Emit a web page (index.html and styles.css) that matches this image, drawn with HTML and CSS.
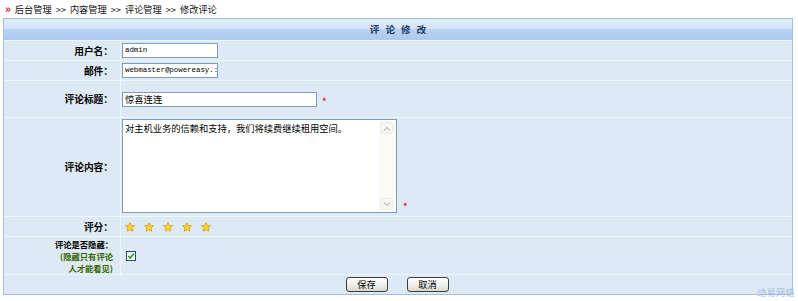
FILE: index.html
```html
<!DOCTYPE html>
<html lang="zh">
<head>
<meta charset="utf-8">
<title>修改评论</title>
<link rel="stylesheet" href="styles.css">
</head>
<body>
<div class="crumb"><span class="raq">»</span>后台管理 &gt;&gt; 内容管理 &gt;&gt; 评论管理 &gt;&gt; 修改评论</div>
<div class="panel">
  <div class="head">评论修改</div>

  <div class="lbl">用户名：</div>
  <div class="val"><div class="inp small">admin</div></div>

  <div class="lbl">邮件：</div>
  <div class="val"><div class="inp small">webmaster@powereasy.:</div></div>

  <div class="lbl">评论标题：</div>
  <div class="val"><div class="inp title">惊喜连连</div><span class="req">*</span></div>

  <div class="lbl">评论内容：</div>
  <div class="val top">
    <div class="ta">
      <div class="ta-text">对主机业务的信赖和支持，我们将续费继续租用空间。</div>
      <div class="ta-bar">
        <div class="arr"><svg width="8" height="5" viewBox="0 0 8 5"><path d="M1 4.5 L4 1.5 L7 4.5" fill="none" stroke="#b9c3d3" stroke-width="1.2"/></svg></div>
        <div class="arr"><svg width="8" height="5" viewBox="0 0 8 5"><path d="M1 0.5 L4 3.5 L7 0.5" fill="none" stroke="#b9c3d3" stroke-width="1.2"/></svg></div>
      </div>
    </div>
    <span class="req bottom">*</span>
  </div>

  <div class="lbl">评分：</div>
  <div class="val stars">
    <svg class="star" viewBox="0 0 10 10"><polygon points="5,0.6 6.3,3.5 9.5,3.7 7.1,5.9 7.8,9.2 5,7.5 2.2,9.2 2.9,5.9 0.5,3.7 3.7,3.5" fill="#ffd52e" stroke="#d79a12" stroke-width="0.8" stroke-linejoin="round"/></svg>
    <svg class="star" viewBox="0 0 10 10"><polygon points="5,0.6 6.3,3.5 9.5,3.7 7.1,5.9 7.8,9.2 5,7.5 2.2,9.2 2.9,5.9 0.5,3.7 3.7,3.5" fill="#ffd52e" stroke="#d79a12" stroke-width="0.8" stroke-linejoin="round"/></svg>
    <svg class="star" viewBox="0 0 10 10"><polygon points="5,0.6 6.3,3.5 9.5,3.7 7.1,5.9 7.8,9.2 5,7.5 2.2,9.2 2.9,5.9 0.5,3.7 3.7,3.5" fill="#ffd52e" stroke="#d79a12" stroke-width="0.8" stroke-linejoin="round"/></svg>
    <svg class="star" viewBox="0 0 10 10"><polygon points="5,0.6 6.3,3.5 9.5,3.7 7.1,5.9 7.8,9.2 5,7.5 2.2,9.2 2.9,5.9 0.5,3.7 3.7,3.5" fill="#ffd52e" stroke="#d79a12" stroke-width="0.8" stroke-linejoin="round"/></svg>
    <svg class="star" viewBox="0 0 10 10"><polygon points="5,0.6 6.3,3.5 9.5,3.7 7.1,5.9 7.8,9.2 5,7.5 2.2,9.2 2.9,5.9 0.5,3.7 3.7,3.5" fill="#ffd52e" stroke="#d79a12" stroke-width="0.8" stroke-linejoin="round"/></svg>
  </div>

  <div class="lbl multi">
    <div class="lines">
      <div>评论是否隐藏：</div>
      <div class="green">(隐藏只有评论</div>
      <div class="green">人才能看见)</div>
    </div>
  </div>
  <div class="val"><div class="chk"><svg width="8" height="8" viewBox="0 0 8 8"><path d="M1.2 4 L3.2 6 L6.8 1.8" fill="none" stroke="#21a121" stroke-width="1.6"/></svg></div></div>

  <div class="foot">
    <div class="btn">保存</div>
    <div class="btn">取消</div>
  </div>
</div>
<div class="mark">动易网络</div>
</body>
</html>
```
FILE: styles.css
```css
html, body {
  margin: 0;
  padding: 0;
  background: #ffffff;
}
body {
  font-family: "Noto Sans CJK SC", "Liberation Sans", sans-serif;
  font-size: 9px;
  color: #000;
  position: relative;
  width: 798px;
  height: 301px;
  overflow: hidden;
}
.crumb {
  height: 18px;
  line-height: 16px;
  padding-left: 5px;
  font-size: 9.2px;
  color: #111;
  white-space: nowrap;
  word-spacing: 2px;
}
.raq {
  color: #c8102e;
  font-weight: bold;
  font-size: 11px;
  margin-right: 4px;
}
.panel {
  margin-left: 3px;
  width: 790px;
  box-sizing: border-box;
  border: 1px solid #a6bfd6;
  display: grid;
  grid-template-columns: 116px 671px;
  grid-template-rows: 21px 19px 19px 36px 98px 19px 37px 19px;
  gap: 1px;
  background: #eef5fc;
}
.head {
  grid-column: 1 / -1;
  background: linear-gradient(#e2edf9 0%, #d3e4f7 45%, #b6d1f1 50%, #adcaee 100%);
  text-align: center;
  font-weight: bold;
  font-size: 9.6px;
  letter-spacing: 6px;
  padding-left: 6px;
  line-height: 21px;
  color: #1b3768;
}
.lbl, .val, .foot {
  background: #dde9f5;
}
.lbl {
  display: flex;
  align-items: center;
  justify-content: flex-end;
  padding-right: 7px;
  font-weight: bold;
  font-size: 9.7px;
  text-align: right;
  white-space: nowrap;
}
.lines {
  display: flex;
  flex-direction: column;
  align-items: flex-end;
  line-height: 12px;
  font-size: 8.3px;
}
.green {
  color: #336600;
}
.val {
  display: flex;
  align-items: center;
  padding-left: 1px;
}
.val.top {
  align-items: flex-start;
  padding-top: 1px;
}
.inp {
  box-sizing: border-box;
  height: 15px;
  border: 1px solid #7f9db9;
  background: #fff;
  padding-left: 2px;
  white-space: nowrap;
  overflow: hidden;
}
.inp.small {
  width: 96px;
  font-family: "Liberation Mono", monospace;
  font-size: 7.4px;
  line-height: 13px;
}
.inp.title {
  width: 195px;
  font-size: 9.3px;
  line-height: 13px;
}
.req {
  color: #e0262c;
  font-weight: bold;
  font-size: 9px;
  margin-left: 5px;
  margin-top: 5px;
}
.req.bottom {
  align-self: flex-end;
  margin-bottom: 3px;
  margin-left: 6px;
}
.ta {
  box-sizing: border-box;
  width: 275px;
  height: 94px;
  border: 1px solid #7f9db9;
  background: #fff;
  display: flex;
}
.ta-text {
  flex: 1;
  padding: 2px 2px;
  font-size: 9.25px;
  line-height: 12px;
}
.ta-bar {
  width: 16px;
  background: #fbfbf5;
  display: flex;
  flex-direction: column;
  justify-content: space-between;
  padding: 2px 0 2px 1px;
}
.arr {
  width: 13px;
  height: 12px;
  box-sizing: border-box;
  border: 1px solid #eeeee4;
  border-radius: 2px;
  background: #f7f7ee;
  display: flex;
  align-items: center;
  justify-content: center;
}
.stars {
  padding-left: 4px;
  gap: 9px;
}
.star {
  width: 10px;
  height: 10px;
}
.chk {
  box-sizing: border-box;
  width: 10px;
  height: 10px;
  margin-left: 4px;
  border: 1px solid #1c5180;
  background: linear-gradient(#ececec, #ffffff);
  display: flex;
  align-items: center;
  justify-content: center;
}
.foot {
  grid-column: 1 / -1;
  display: flex;
  justify-content: center;
  align-items: center;
  gap: 19px;
  padding-right: 2px;
}
.btn {
  box-sizing: border-box;
  width: 42px;
  height: 15px;
  border: 1px solid #3c3c3c;
  border-radius: 3px;
  background: linear-gradient(#ffffff, #ecece6 60%, #d8d8d0);
  text-align: center;
  font-size: 9.2px;
  line-height: 13px;
}
.mark {
  position: absolute;
  right: 3px;
  bottom: 2px;
  font-size: 9px;
  color: #a9c3df;
  letter-spacing: 0.5px;
}
```
